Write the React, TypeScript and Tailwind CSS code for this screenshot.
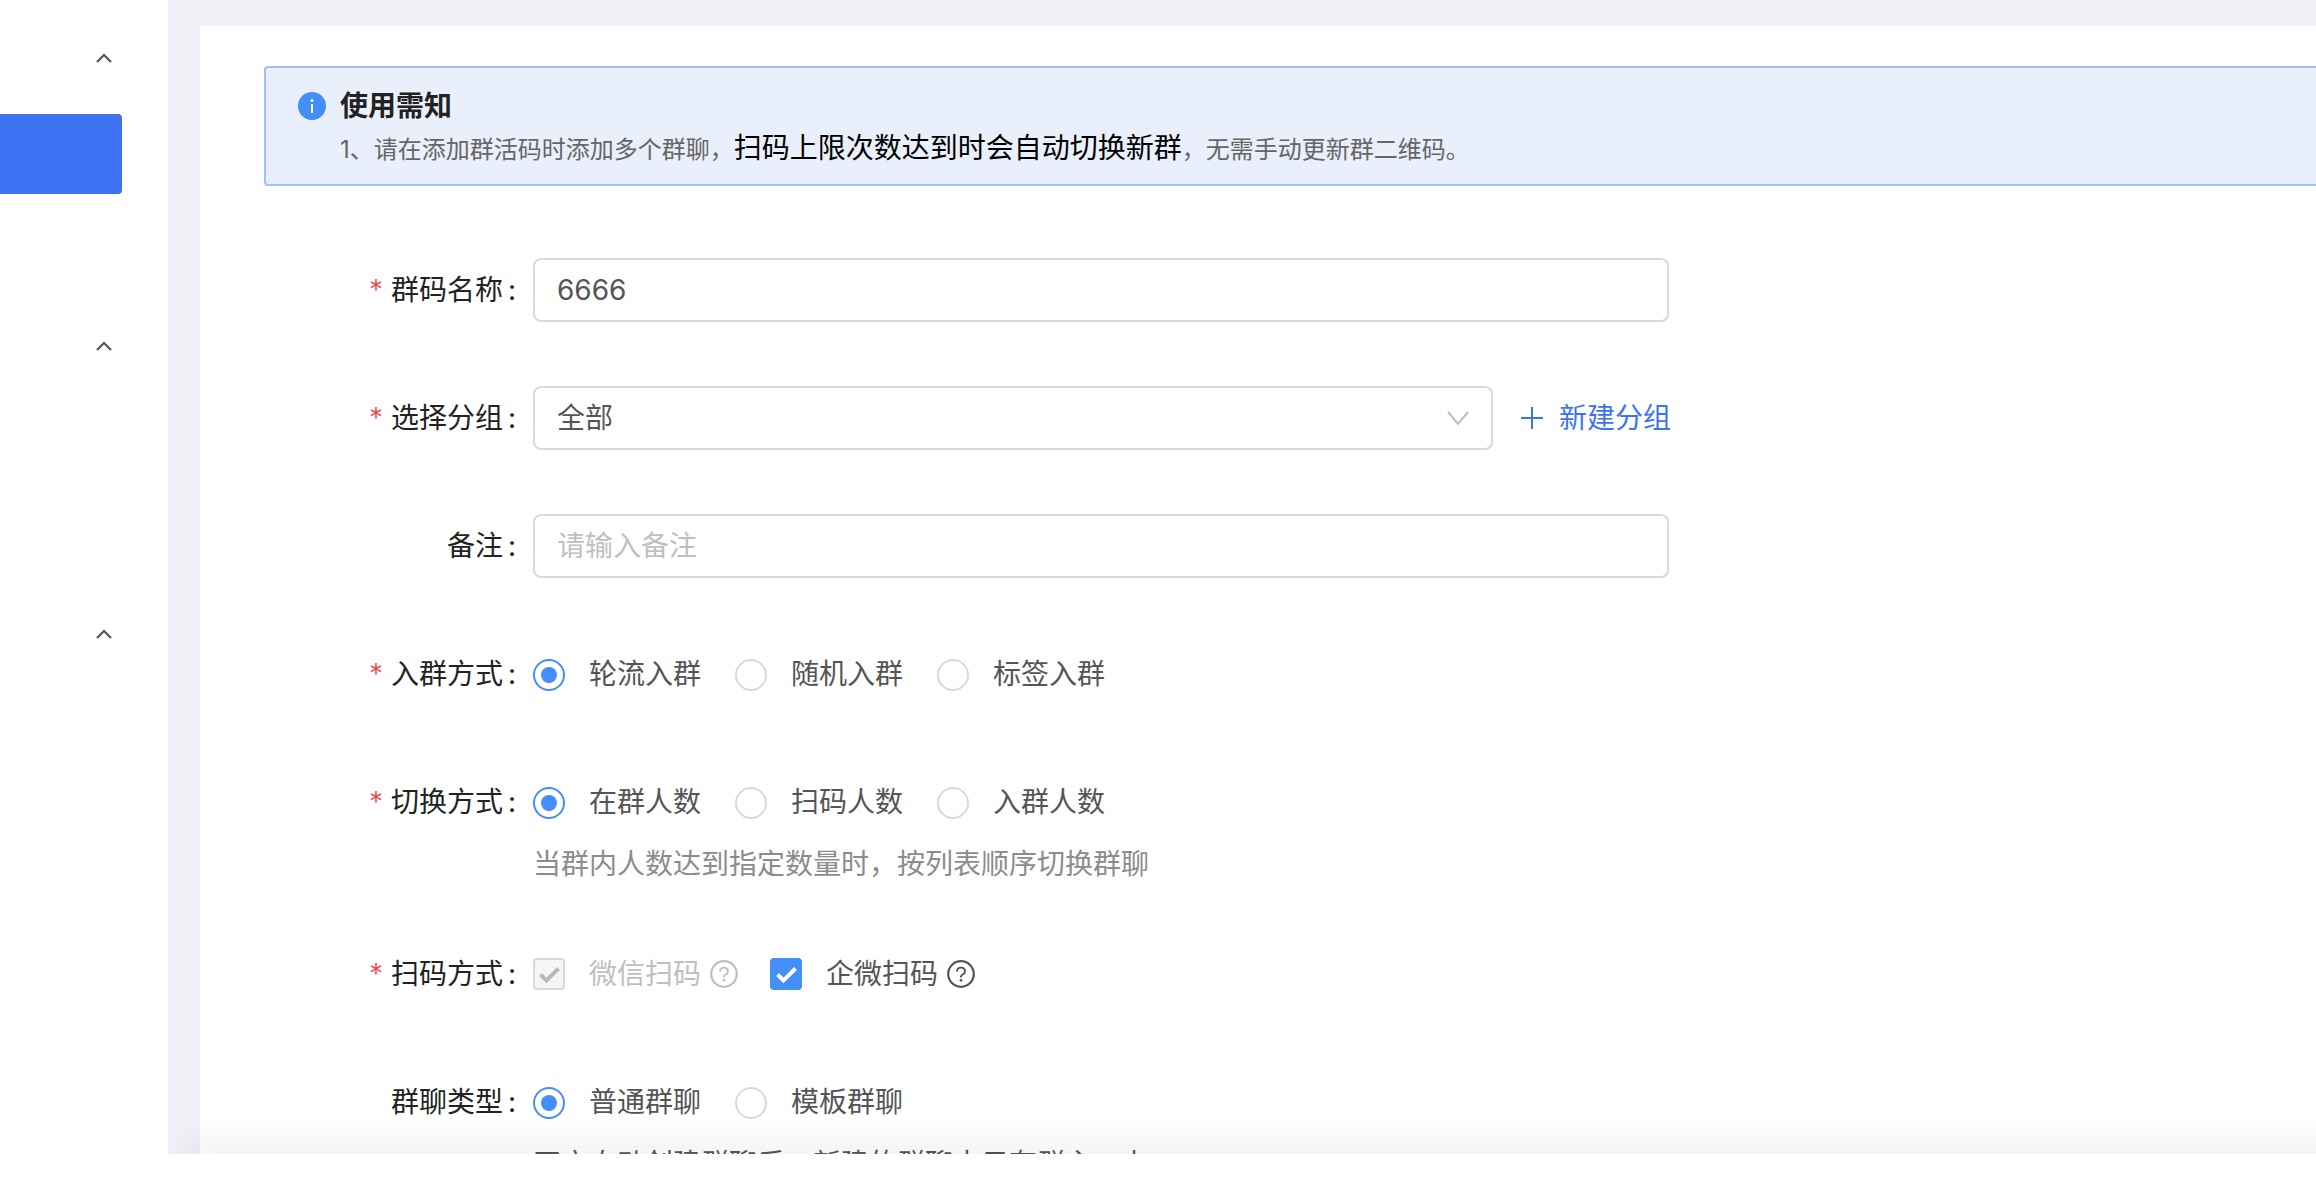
import * as React from "react";

type Option = { value: string; label: string };

const joinOptions: Option[] = [
  { value: "rotate", label: "轮流入群" },
  { value: "random", label: "随机入群" },
  { value: "tag", label: "标签入群" },
];

const switchOptions: Option[] = [
  { value: "members", label: "在群人数" },
  { value: "scans", label: "扫码人数" },
  { value: "joined", label: "入群人数" },
];

const typeOptions: Option[] = [
  { value: "normal", label: "普通群聊" },
  { value: "template", label: "模板群聊" },
];

function ChevronUp() {
  return (
    <svg viewBox="0 0 16 16" className="h-4 w-4" fill="none" stroke="#555" strokeWidth="2.2">
      <path d="M1 12 8 5l7 7" />
    </svg>
  );
}

function QuestionCircle() {
  return (
    <svg viewBox="0 0 28 28" className="h-7 w-7" fill="none" stroke="currentColor" strokeWidth="2.2">
      <circle cx="14" cy="14" r="12.8" />
      <path d="M10 11.4c0-2.2 1.7-3.8 4-3.8s4 1.5 4 3.6c0 1.8-1 2.7-2.3 3.3-1.2.6-1.7 1.1-1.7 2.1v.9" strokeWidth="1.9" />
      <circle cx="14" cy="20.3" r="1.4" fill="currentColor" stroke="none" />
    </svg>
  );
}

function FormRow({
  label,
  htmlFor,
  required = false,
  hint,
  children,
}: {
  label: string;
  htmlFor?: string;
  required?: boolean;
  hint?: React.ReactNode;
  children: React.ReactNode;
}) {
  return (
    <div className="flex">
      <div className="flex h-16 w-[269px] shrink-0 items-center justify-end pr-[10px] text-[#222]">
        {required ? <span className="mr-2 font-light text-[#f04142]">*</span> : null}
        <label htmlFor={htmlFor}>{label}</label>
        <span className="w-5 pl-[5px]">:</span>
      </div>
      <div className="w-full max-w-[1140px]">
        <div className="flex min-h-16 items-center">{children}</div>
        {hint}
      </div>
    </div>
  );
}

function RadioGroup({
  name,
  options,
  value,
  onChange,
}: {
  name: string;
  options: Option[];
  value: string;
  onChange: (v: string) => void;
}) {
  return (
    <div role="radiogroup" className="flex gap-[34px]">
      {options.map((opt) => (
        <label key={opt.value} className="flex items-center gap-6 whitespace-nowrap text-[#555]">
          <span className="grid place-items-center pt-[2px]">
            <input
              type="radio"
              name={name}
              checked={value === opt.value}
              onChange={() => onChange(opt.value)}
              className="peer col-start-1 row-start-1 h-8 w-8 appearance-none rounded-full border-2 border-[#d9d9d9] bg-white checked:border-[#448ef7]"
            />
            <span className="col-start-1 row-start-1 hidden h-4 w-4 rounded-full bg-[#448ef7] peer-checked:block" />
          </span>
          {opt.label}
        </label>
      ))}
    </div>
  );
}

function CheckItem({
  label,
  checked,
  disabled = false,
  onChange,
}: {
  label: string;
  checked: boolean;
  disabled?: boolean;
  onChange?: (v: boolean) => void;
}) {
  return (
    <div className={"flex items-center gap-[9px] " + (disabled ? "text-[#bfbfbf]" : "text-[#555]")}>
      <label className="flex items-center gap-6 whitespace-nowrap">
        <span className="grid place-items-center">
          <input
            type="checkbox"
            checked={checked}
            disabled={disabled}
            onChange={(e) => onChange?.(e.target.checked)}
            className="peer col-start-1 row-start-1 h-8 w-8 appearance-none rounded-sm border-2 border-[#d9d9d9] bg-white checked:border-[#448ef7] checked:bg-[#448ef7] disabled:border-[#d9d9d9] disabled:bg-[#f5f5f5]"
          />
          <svg
            viewBox="0 0 32 32"
            className="pointer-events-none col-start-1 row-start-1 hidden h-8 w-8 text-white peer-checked:block peer-disabled:text-[#b8b8b8]"
            fill="none"
            stroke="currentColor"
            strokeWidth="4">
            <path d="m7.5 16.5 6 6L25.5 10.5" />
          </svg>
        </span>
        {label}
      </label>
      <QuestionCircle />
    </div>
  );
}

export default function App() {
  const [name, setName] = React.useState("6666");
  const [remark, setRemark] = React.useState("");
  const [joinMode, setJoinMode] = React.useState("rotate");
  const [switchMode, setSwitchMode] = React.useState("members");
  const [chatType, setChatType] = React.useState("normal");
  const [workScan, setWorkScan] = React.useState(true);

  const field =
    "h-16 w-full rounded-lg border-2 border-[#d9d9d9] bg-white px-[22px] text-[#555] outline-none placeholder:text-[#bfbfbf]";

  return (
    <div className="flex h-screen overflow-hidden bg-[#f0f1f6] font-['Inter','Noto_Sans_CJK_SC',sans-serif] text-[28px] leading-10">
      <aside className="z-10 flex w-[168px] shrink-0 flex-col bg-white">
        {["one", "two", "three"].map((group, i) => (
          <div key={group} className="h-72">
            <button type="button" aria-label="收起菜单" className="ml-24 mt-[50px] block h-4 w-4">
              <ChevronUp />
            </button>
            {i === 0 ? <div className="mt-12 h-20 w-[122px] rounded-r bg-[#3d73f2]" /> : null}
          </div>
        ))}
      </aside>

      <div className="flex min-w-0 flex-1 flex-col">
        <main className="min-h-0 flex-1 overflow-hidden pl-8 pt-[26px]">
          <div className="bg-white pl-16 pt-10">
            <div className="flex gap-[14px] rounded-l border-2 border-r-0 border-[#a0bffd] bg-[#e9effb] pb-[14px] pl-8 pt-[18px]">
              <svg viewBox="0 0 28 28" className="mt-[6px] h-7 w-7 shrink-0">
                <circle cx="14" cy="14" r="14" fill="#448ef7" />
                <circle cx="14" cy="8.5" r="1.6" fill="#fff" />
                <rect x="13" y="12" width="2" height="9" fill="#fff" />
              </svg>
              <div>
                <h2 className="font-bold text-[#222]">使用需知</h2>
                <p className="flex h-11 items-baseline whitespace-nowrap pt-[2px] text-2xl leading-10 text-[#666]">
                  1、请在添加群活码时添加多个群聊，
                  <span className="text-[28px] text-black">扫码上限次数达到时会自动切换新群</span>
                  ，无需手动更新群二维码。
                </p>
              </div>
            </div>

            <form className="mt-[72px] flex flex-col gap-16">
              <FormRow label="群码名称" htmlFor="name" required>
                <div className="mr-1 flex w-full">
                  <input id="name" value={name} onChange={(e) => setName(e.target.value)} className={field} />
                </div>
              </FormRow>

              <FormRow label="选择分组" htmlFor="group" required>
                <div className="grid w-full max-w-[960px] items-center">
                  <select id="group" className={field + " col-start-1 row-start-1 appearance-none"}>
                    <option>全部</option>
                  </select>
                  <svg
                    viewBox="0 0 22 16"
                    className="pointer-events-none col-start-1 row-start-1 mr-6 h-4 w-[22px] justify-self-end"
                    fill="none"
                    stroke="#bfbfbf"
                    strokeWidth="2">
                    <path d="m1 2 10 12L21 2" />
                  </svg>
                </div>
                <button type="button" className="ml-7 flex shrink-0 items-center gap-4 text-[#3d73f2]">
                  <svg viewBox="0 0 22 22" className="h-[22px] w-[22px]" stroke="currentColor" strokeWidth="2">
                    <path d="M11 0v22M0 11h22" />
                  </svg>
                  新建分组
                </button>
              </FormRow>

              <FormRow label="备注" htmlFor="remark">
                <div className="mr-1 flex w-full">
                  <input
                    id="remark"
                    value={remark}
                    placeholder="请输入备注"
                    onChange={(e) => setRemark(e.target.value)}
                    className={field}
                  />
                </div>
              </FormRow>

              <FormRow label="入群方式" required>
                <RadioGroup name="join" options={joinOptions} value={joinMode} onChange={setJoinMode} />
              </FormRow>

              <FormRow
                label="切换方式"
                required
                hint={<p className="h-11 pt-[10px] text-[#8c8c8c]">当群内人数达到指定数量时，按列表顺序切换群聊</p>}>
                <RadioGroup name="switch" options={switchOptions} value={switchMode} onChange={setSwitchMode} />
              </FormRow>

              <FormRow label="扫码方式" required>
                <div className="flex gap-8">
                  <CheckItem label="微信扫码" checked disabled />
                  <CheckItem label="企微扫码" checked={workScan} onChange={setWorkScan} />
                </div>
              </FormRow>

              <FormRow
                label="群聊类型"
                hint={<p className="pt-[10px] text-[#555]">开启自动创建群聊后，新建的群聊中只有群主，上</p>}>
                <RadioGroup name="type" options={typeOptions} value={chatType} onChange={setChatType} />
              </FormRow>
            </form>
          </div>
        </main>

        <footer className="-mr-12 h-10 shrink-0 bg-white shadow-[0_-24px_28px_-16px_rgba(0,0,0,0.16)]" />
      </div>
    </div>
  );
}
